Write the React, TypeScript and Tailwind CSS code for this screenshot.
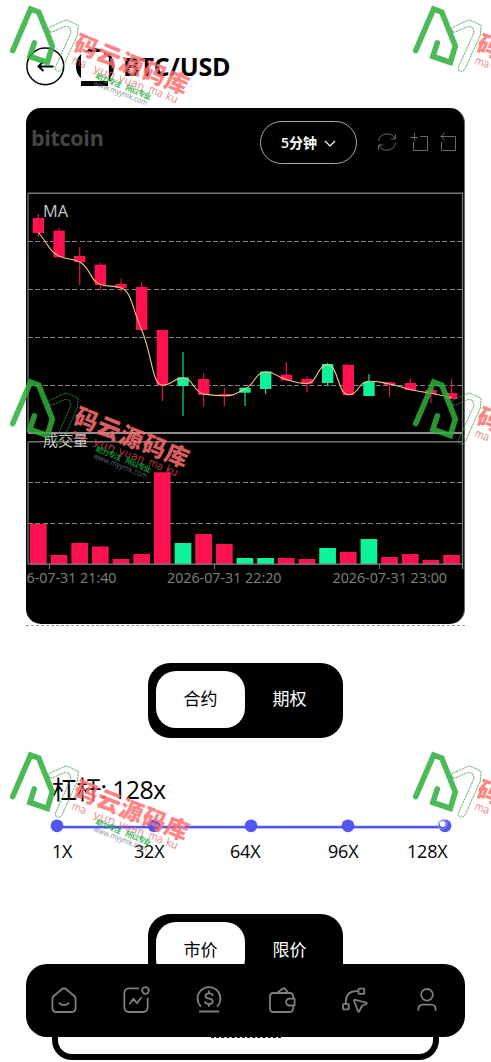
import React from "react";

const RED = "#ff1150";
const GREEN = "#0df39b";

type Candle = {
  high: number;
  top: number;
  bottom: number;
  low: number;
  ma: number;
  volume: number;
  up?: boolean;
};

const candles: Candle[] = [
  { high: 214, top: 218, bottom: 233, low: 237, ma: 232.5, volume: 524 },
  { high: 228, top: 230.7, bottom: 257.3, low: 257, ma: 256, volume: 555 },
  { high: 247, top: 256, bottom: 262, low: 285, ma: 262, volume: 543 },
  { high: 262.7, top: 264.7, bottom: 285, low: 290, ma: 284.5, volume: 546.5 },
  { high: 278.7, top: 284, bottom: 288, low: 291.7, ma: 288, volume: 559 },
  { high: 282.3, top: 287, bottom: 330, low: 330, ma: 330, volume: 554 },
  { high: 330, top: 330, bottom: 385, low: 401, ma: 385.3, volume: 472.3 },
  { high: 352, top: 377.3, bottom: 386, low: 416, ma: 378, volume: 543, up: true },
  { high: 373, top: 379, bottom: 395, low: 406.7, ma: 394, volume: 534 },
  { high: 387.7, top: 394, bottom: 396, low: 406, ma: 395.7, volume: 544 },
  { high: 387.7, top: 387.7, bottom: 392.7, low: 406, ma: 389, volume: 558, up: true },
  { high: 371, top: 371.5, bottom: 389, low: 394, ma: 372, volume: 558, up: true },
  { high: 362, top: 374.7, bottom: 380.5, low: 380, ma: 379.5, volume: 558 },
  { high: 376, top: 379, bottom: 384, low: 392, ma: 383.5, volume: 559 },
  { high: 363, top: 364, bottom: 383, low: 386, ma: 364.7, volume: 548, up: true },
  { high: 364.7, top: 364.7, bottom: 395, low: 395, ma: 394.7, volume: 552 },
  { high: 374, top: 382, bottom: 396, low: 396, ma: 381.3, volume: 539, up: true },
  { high: 382, top: 382.3, bottom: 384.8, low: 397, ma: 384, volume: 557 },
  { high: 378.7, top: 383, bottom: 390, low: 391, ma: 389.5, volume: 554 },
  { high: 388, top: 390, bottom: 394, low: 403, ma: 393.3, volume: 560 },
  { high: 378.7, top: 393, bottom: 399, low: 399, ma: 397.5, volume: 555 },
];

const centre = (i: number) => 38.4 + 20.66 * i;

function averagePath(): string {
  const ys = candles.map((c) => c.ma);
  const slopes = ys.map((_, i) => {
    if (i === 0) return ys[1] - ys[0];
    if (i === ys.length - 1) return ys[i] - ys[i - 1];
    const a = ys[i] - ys[i - 1];
    const b = ys[i + 1] - ys[i];
    return a * b <= 0 ? 0 : (2 * a * b) / (a + b);
  });
  let d = `M${centre(0)} ${ys[0]}`;
  for (let i = 1; i < ys.length; i++) {
    const x0 = centre(i - 1);
    const x1 = centre(i);
    const w = (x1 - x0) * 0.5;
    d += `C${x0 + w} ${ys[i - 1] + slopes[i - 1] * 0.5} ${x1 - w} ${ys[i] - slopes[i] * 0.5} ${x1} ${ys[i]}`;
  }
  return d;
}

function Chart() {
  return (
    <svg width="439" height="400" viewBox="26 190 439 400" className="block">
      <g stroke="#858585" strokeWidth="1" strokeDasharray="5 2.4" shapeRendering="crispEdges">
        {[241.5, 289.5, 337.5, 385.5, 482.5, 523.5].map((y) => (
          <line key={y} x1="28" x2="462.5" y1={y} y2={y} />
        ))}
      </g>
      <g stroke="#777" fill="none">
        <path d="M28 193.2H463M28 441.8H463" strokeWidth="1.5" />
        <path d="M28 433H463" stroke="#909090" strokeWidth="2" />
        <path d="M28 193V433M28 442V564M462.5 193V569" strokeWidth="1.3" />
        <path d="M49.5 564v5M214.5 564v5M379.5 564v5" strokeWidth="1" />
      </g>
      {candles.map((c, i) => {
        const color = c.up ? GREEN : RED;
        return (
          <g key={i} fill={color}>
            <rect x={centre(i) - 8.4} y={c.volume} width="16.7" height={564 - c.volume} />
            <line x1={centre(i)} x2={centre(i)} y1={c.high} y2={c.low} stroke={color} strokeWidth="1.1" />
            <rect x={centre(i) - 5.7} y={c.top} width="11.4" height={c.bottom - c.top} />
          </g>
        );
      })}
      <path d="M28 564.2H463" stroke="#888" strokeWidth="1.2" />
      <path d={averagePath()} fill="none" stroke="#fac978" strokeWidth="1.1" />
      <g fontFamily="'Open Sans','Noto Sans CJK SC',sans-serif" fill="#c8c8c8">
        <text x="43" y="217" fontSize="16" fontWeight="500" textLength="25" lengthAdjust="spacingAndGlyphs">MA</text>
        <text x="43" y="445.5" fontSize="15" textLength="45">成交量</text>
        <g fontSize="14.3" fill="#808080">
          <text x="2" y="583.3" textLength="114.5" lengthAdjust="spacingAndGlyphs">2026-07-31 21:40</text>
          <text x="167" y="583.3" textLength="114.5" lengthAdjust="spacingAndGlyphs">2026-07-31 22:20</text>
          <text x="332.5" y="583.3" textLength="114.5" lengthAdjust="spacingAndGlyphs">2026-07-31 23:00</text>
        </g>
      </g>
    </svg>
  );
}

function Watermark() {
  return (
    <svg width="200" height="112" viewBox="0 0 200 112" className="block opacity-85">
      <path d="M12.7 50.7 30.6 9 38.8 12.2 52.3 46 47.3 62.3 29.9 56.4 34.3 42.8" fill="none" stroke="#2fae3b" strokeWidth="5.6" strokeLinecap="round" />
      <path d="M50 32Q47.8 30 49.5 27.3L66.3 19.8 78.2 25.2 77.4 35 62 69Q59.5 73 55.5 70 54.8 68 55.5 67L71 32.5 69.5 27.4 65.5 26.2 52.2 32Z" fill="none" stroke="#359b46" strokeWidth="0.9" strokeDasharray="2.4 0.6" />
      <text transform="translate(72.3 50) rotate(21.9)" fontSize="23.5" fontWeight="900" fill="#ff7070" fontFamily="'Noto Sans CJK SC',sans-serif" textLength="121">码云源码库</text>
      <g transform="translate(71 63) rotate(20.8)" fontSize="10.5" fill="#f0575d" stroke="#f0575d" strokeWidth="0.2" fontFamily="'DejaVu Sans',sans-serif" fontWeight="200">
        <text x="0" y="0" textLength="15" lengthAdjust="spacingAndGlyphs">ma</text>
        <text x="23" y="0" textLength="23" lengthAdjust="spacingAndGlyphs">yun</text>
        <text x="50" y="0" textLength="27" lengthAdjust="spacingAndGlyphs">yuan</text>
        <text x="82" y="0" textLength="15" lengthAdjust="spacingAndGlyphs">ma</text>
        <text x="100" y="0" textLength="13" lengthAdjust="spacingAndGlyphs">ku</text>
      </g>
      <g transform="translate(95 78) rotate(21.6)" fontSize="7.4" fontWeight="700" fill="#12ad38" fontFamily="'Noto Sans CJK SC',sans-serif">
        <text x="0" y="0" textLength="27">助力专注</text>
        <text x="32" y="0" textLength="27">所以专业</text>
      </g>
      <text transform="translate(93 85) rotate(21.3)" fontSize="8" fill="#6a7b88" fontFamily="'Open Sans',sans-serif" textLength="57" lengthAdjust="spacingAndGlyphs">www.myymk.com</text>
    </svg>
  );
}

function Toggle({ left, right }: { left: string; right: string }) {
  return (
    <div className="mx-auto flex h-[75px] w-[195px] rounded-[22px] bg-black p-2 text-[17px]">
      <div className="flex h-[57px] w-[89px] items-center justify-center rounded-[20px] bg-white pb-px text-black">{left}</div>
      <div className="flex h-[57px] w-[89px] items-center justify-center pb-px text-white">{right}</div>
    </div>
  );
}

const toolIcon = { width: 20, height: 20, viewBox: "0 0 20 20", fill: "none", stroke: "#696969", strokeWidth: 1 };

function Tools() {
  return (
    <div className="flex items-center">
      <svg {...toolIcon}>
        <path d="M1.5 9A8.7 8.7 0 0 1 18 7M18.5 11A8.7 8.7 0 0 1 2 13M18.4 2v5h-4.5M1.6 18v-5h4.5" />
      </svg>
      <svg {...toolIcon} className="ml-[13px]">
        <path d="M.5 5.5H8M4.5 1v7.5M10 4.5h7.5v14h-14V10" />
      </svg>
      <svg {...toolIcon} className="ml-[9px]">
        <path d="M6 .5 2 4.5 6 8.5M2 4.5H16.5v14H2.5V10" />
      </svg>
    </div>
  );
}

function NavIcon({ children }: { children: React.ReactNode }) {
  return (
    <svg width="28" height="28" viewBox="0 0 28 28" fill="none" stroke="#7f7f7f" strokeWidth="1.8" strokeLinejoin="round" strokeLinecap="round">
      {children}
    </svg>
  );
}

function BottomNav() {
  return (
    <nav className="flex h-[73px] items-center rounded-[21px] bg-black pl-[23.5px]">
      <div className="flex w-[392px] justify-between">
        <NavIcon>
          <path d="M2.4 12.6Q2.4 11.2 3.5 10.2L11.8 3.2Q14 1.4 16.2 3.2L24.5 10.2Q25.6 11.2 25.6 12.6V22Q25.6 26 21.6 26H6.4Q2.4 26 2.4 22ZM9.4 17.3Q14 21 18.6 17.3" />
        </NavIcon>
        <NavIcon>
          <path d="M16 2.4H7.5Q2.3 2.4 2.3 7.6V20.8Q2.3 26 7.5 26H20.5Q25.7 26 25.7 20.8V12.5M7.8 17.5 11.5 12.8 15 17.2 19 11.8" />
          <circle cx="23.5" cy="4.5" r="3.3" />
        </NavIcon>
        <NavIcon>
          <path d="M6 20.6A11.4 11.4 0 1 1 22 20.6M4 25.5H24" strokeLinecap="butt" />
          <path d="M17.7 9.3Q17.2 7.4 14 7.4 10.4 7.4 10.4 10 10.4 12.2 14 12.6 17.8 13.2 17.8 15.5 17.8 18 14 18 10.5 18 10 16M14 5.2V7.4M14 18V20" />
        </NavIcon>
        <NavIcon>
          <path d="M5.5 7H21.5Q25.3 7 25.3 10.8V12.7H21.5A3.4 3.4 0 0 0 21.5 19.5H25.3V21.8Q25.3 26 21.5 26H5.5Q2 26 2 22.3V10.6Q2 7 5.5 7ZM25.3 12.7H26.6V19.5H25.3M8.8 7 15 2.5Q16.2 1.7 17.2 3L20.4 7" />
        </NavIcon>
        <NavIcon>
          <rect x="17.5" y="2.6" width="5.8" height="5.3" rx="1" />
          <rect x="2" y="17.8" width="5.8" height="5.6" rx="1" />
          <path d="M4.8 17.5V15.5Q5 5.5 15 5.2H17M13.4 13.6 25.2 16.6Q26.6 17.2 25.2 18L20.8 20 18.4 25.2Q17.7 26.6 17 25.2L13 14.5Z" />
        </NavIcon>
        <NavIcon>
          <circle cx="14" cy="8.8" r="5.8" />
          <path d="M5.3 24Q5.3 18.7 10 18.7H18Q22.7 18.7 22.7 24" />
        </NavIcon>
      </div>
    </nav>
  );
}

export default function App() {
  return (
    <main className="relative h-[1062px] w-[491px] overflow-hidden bg-white px-[26px] font-['Open_Sans','Noto_Sans_CJK_SC',sans-serif] text-black">
      <header className="flex h-[108px] items-start pt-[47px]">
        <svg width="39" height="39" viewBox="0 0 39 39" fill="none" stroke="#000" strokeWidth="1.5">
          <circle cx="19.3" cy="19.3" r="18.4" />
          <path d="M27.5 19.5H12.5M16.8 15 12.5 19.5 17.5 24" strokeWidth="1.9" />
        </svg>
        <svg width="39" height="39" viewBox="0 0 39 39" className="ml-[10px]">
          <path d="M6 7Q1 12 1 19.5T6 31ZM6 34H33V39H6ZM9 5 14 2 20 1 28 3 25 5ZM35 7Q39 13 39 19.5T35 31ZM29 5 35 8V11L29 7Z" />
          <path d="M34.5 7V34" stroke="#000" strokeWidth="1.2" />
        </svg>
        <h1 className="ml-[9px] text-[25px] leading-[39px] font-bold tracking-[-0.2px]">BTC/USD</h1>
      </header>

      <section className="h-[516px] w-[439px] overflow-hidden rounded-[15px] border-r border-[#666] bg-black">
        <div className="flex h-[82px] items-start pt-[13px] pl-[5px]">
          <h2 className="mt-[3px] w-[229px] text-[21.5px] leading-[28px] font-bold tracking-[-0.3px] text-[#454545]">bitcoin</h2>
          <div className="flex h-[43px] w-[97px] shrink-0 items-center justify-center gap-[7px] rounded-full border border-[#aaa] text-[14px] font-semibold text-white">
            <span>5分钟</span>
            <svg width="12" height="8" viewBox="0 0 12 8" fill="none" stroke="#fff" strokeWidth="1.2" className="mt-[3px]">
              <path d="m1 1 5 5L11 1" />
            </svg>
          </div>
          <div className="mt-[11px] ml-5">
            <Tools />
          </div>
        </div>
        <Chart />
      </section>
      <div className="mt-px h-0 border-t border-dashed border-[#999]" />

      <div className="mt-[37px]">
        <Toggle left="合约" right="期权" />
      </div>

      <section className="mt-[32px] h-[144px] pl-[26px]">
        <h3 className="h-[49px] text-[25px] leading-[38px] tracking-[-0.7px]">杠杆: 128x</h3>
        <svg width="402" height="14" viewBox="0 0 402 14" className="block overflow-visible">
          <path d="M5 8.2H387" stroke="#b9baff" strokeWidth="3.4" />
          <path d="M5 8H387" stroke="#5354ef" strokeWidth="2" />
          {[5, 102, 199, 296, 393].map((x) => (
            <circle key={x} cx={x} cy="6.8" r="6.4" fill="#5354f4" />
          ))}
          <circle cx="390.5" cy="5.3" r="4.6" fill="none" stroke="#a5a5ff" strokeWidth="0.8" />
          <circle cx="390.7" cy="5" r="2.9" fill="#fff" />
        </svg>
        <div className="grid grid-cols-[82px_96px_98px_79px_60px] pt-[5px] text-[18px] leading-[26px] tracking-[-0.2px]">
          <span>1X</span>
          <span>32X</span>
          <span>64X</span>
          <span>96X</span>
          <span>128X</span>
        </div>
      </section>

      <Toggle left="市价" right="限价" />

      <div className="mx-auto mt-[31px] flex h-[40px] w-[387px] justify-center rounded-b-[20px] border-6 border-t-0 border-black">
        <div className="mt-[17px] h-0 w-[70px] border-t border-dashed border-black" />
      </div>

      <div className="absolute bottom-[25.5px] left-[26px] w-[439px]">
        <BottomNav />
      </div>

      <div className="pointer-events-none absolute top-0 left-0 grid w-[806px] grid-cols-[403px_403px] grid-rows-[373px_373px_373px]">
        <Watermark />
        <Watermark />
        <Watermark />
        <Watermark />
        <Watermark />
        <Watermark />
      </div>
    </main>
  );
}
